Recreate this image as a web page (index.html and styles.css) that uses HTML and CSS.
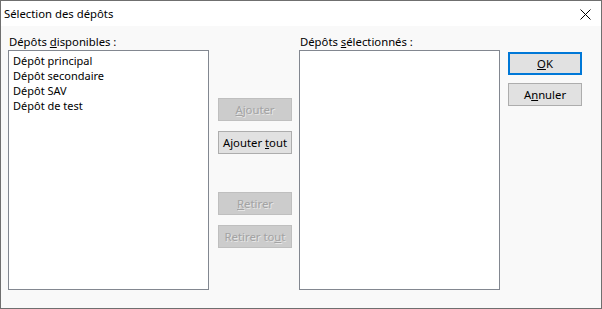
FILE: index.html
```html
<!DOCTYPE html>
<html>
<head>
    <meta charset="utf-8">
    <title>Sélection des dépôts</title>
    <link rel="stylesheet" href="styles.css">
</head>
<body>
    <div class="window">
        <div class="titlebar">
            <span class="title">Sélection des dépôts</span>
            <span class="close">
                <svg width="11" height="11" viewBox="0 0 11 11">
                    <path d="M0.5 0.5 L10.5 10.5 M10.5 0.5 L0.5 10.5" stroke="#000" stroke-width="1" fill="none"/>
                </svg>
            </span>
        </div>
        <div class="content">
            <label class="lbl">Dépôts <u>d</u>isponibles :</label>
            <div></div>
            <label class="lbl">Dépôts <u>s</u>électionnés :</label>
            <div></div>

            <ul class="listbox">
                <li>Dépôt principal</li>
                <li>Dépôt secondaire</li>
                <li>Dépôt SAV</li>
                <li>Dépôt de test</li>
            </ul>
            <div class="middle">
                <button class="btn" disabled><u>A</u>jouter</button>
                <button class="btn">Ajouter <u>t</u>out</button>
                <button class="btn gap" disabled><u>R</u>etirer</button>
                <button class="btn" disabled>Retirer to<u>u</u>t</button>
            </div>
            <ul class="listbox"></ul>
            <div class="actions">
                <button class="btn default"><u>O</u>K</button>
                <button class="btn">A<u>n</u>nuler</button>
            </div>
        </div>
    </div>
</body>
</html>
```

FILE: styles.css
```css
html, body {
    margin: 0;
    padding: 0;
}

body {
    font-family: "Noto Sans", "Liberation Sans", sans-serif;
    font-size: 11.3px;
    color: #000;
    background: #fff;
}

.window {
    width: 600px;
    height: 307px;
    border: 1px solid #6f6f6f;
    background: #f9f9f9;
}

.titlebar {
    height: 25px;
    background: #fff;
    display: flex;
    justify-content: space-between;
    align-items: flex-start;
}

.title {
    padding-left: 3px;
    padding-top: 5px;
    line-height: 15px;
}

.close {
    padding-top: 8px;
    padding-right: 10px;
}

.close svg {
    display: block;
}

.content {
    display: grid;
    grid-template-columns: 201px 74px 201px 74px;
    grid-template-rows: 15px 240px;
    column-gap: 8px;
    padding: 9px 0 0 7px;
}

.content .middle {
    margin-left: 1px;
    margin-right: -1px;
}

.lbl {
    line-height: 15px;
    padding-left: 1px;
    position: relative;
    top: -1px;
}

.listbox {
    list-style: none;
    margin: 0;
    padding: 2px 4px;
    background: #fff;
    border: 1px solid #828790;
}

.listbox li {
    font-size: 11px;
    line-height: 15px;
}

.middle {
    display: flex;
    flex-direction: column;
    padding-top: 48px;
    gap: 10px;
}

.middle .gap {
    margin-top: 28px;
}

.actions {
    display: flex;
    flex-direction: column;
    padding-top: 2px;
    gap: 8px;
}

.btn {
    box-sizing: border-box;
    width: 74px;
    height: 23px;
    padding: 0;
    font-family: "Noto Sans", "Liberation Sans", sans-serif;
    font-size: 11.3px;
    color: #000;
    background: #e1e1e1;
    border: 1px solid #adadad;
    border-radius: 0;
}

.btn:disabled {
    background: #cccccc;
    border-color: #bfbfbf;
    color: #a3a3a3;
    text-shadow: 1px 1px 0 #e6e6e6;
}

.default {
    border: 2px solid #0078d7;
}
```
